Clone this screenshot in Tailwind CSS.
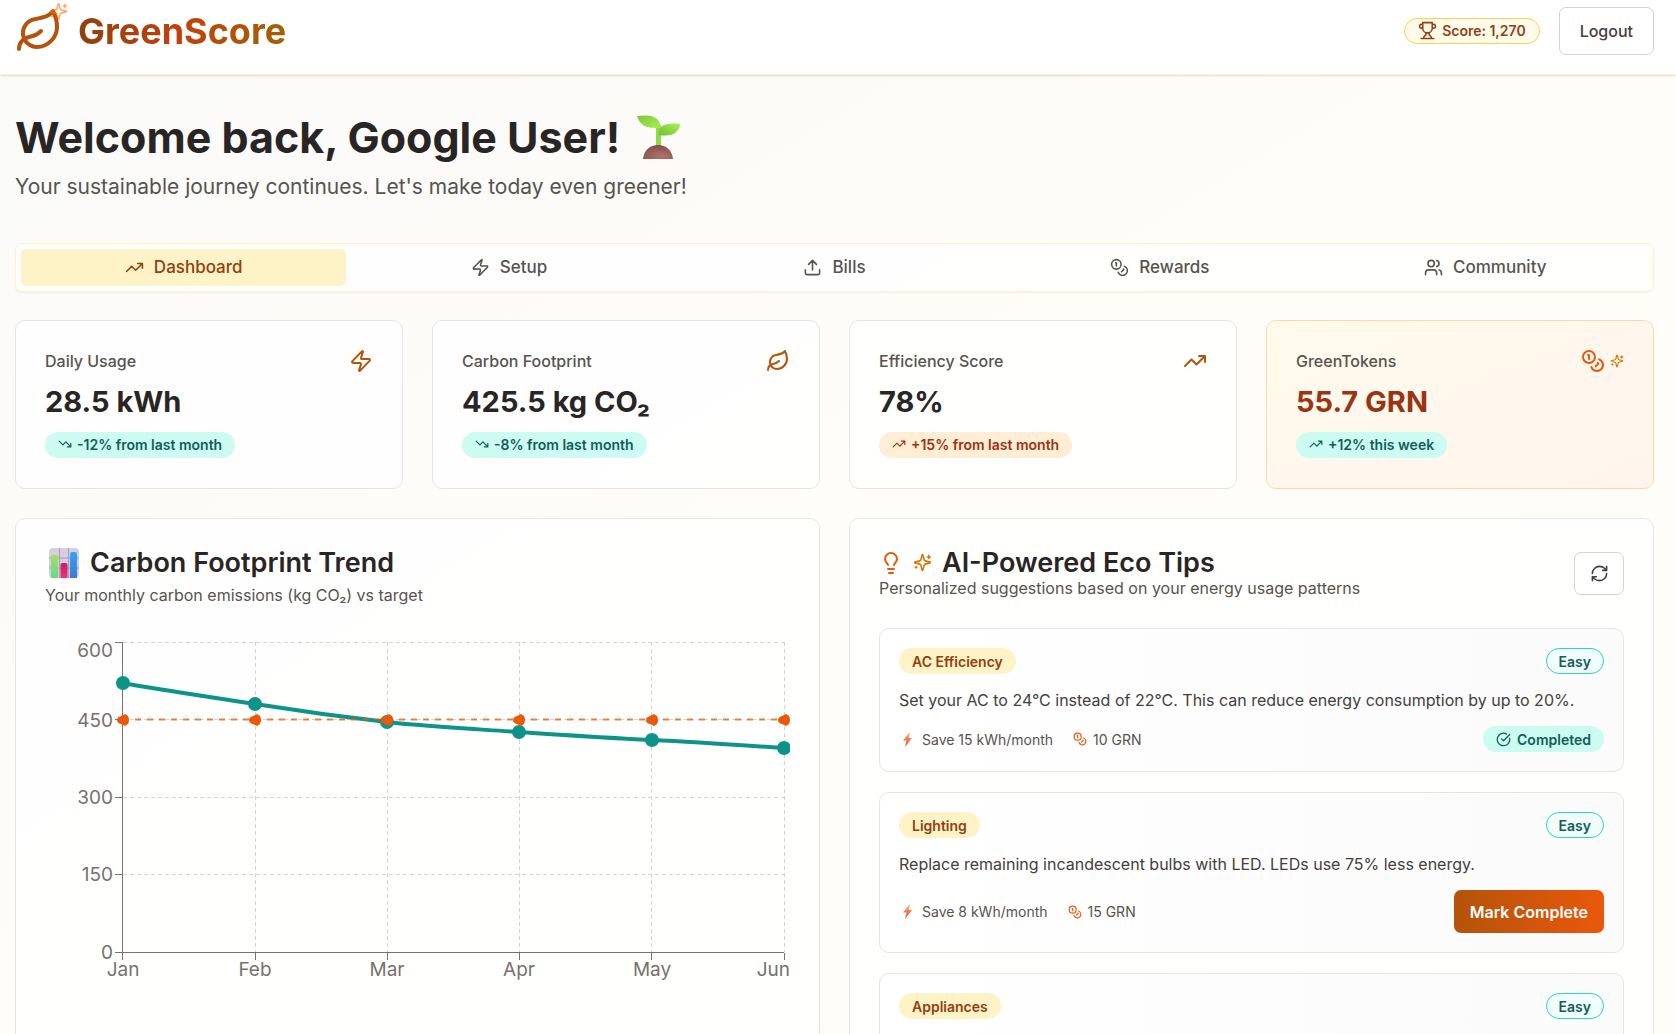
<!DOCTYPE html>
<html lang="en">
<head>
<meta charset="utf-8">
<meta name="viewport" content="width=device-width, initial-scale=1">
<title>GreenScore</title>
<script src="https://cdn.jsdelivr.net/npm/@tailwindcss/browser@4"></script>
</head>
<body class="h-screen overflow-hidden bg-linear-to-br from-[#fafaf9] via-[#fffdf9] to-[#fffdf8] font-['Inter',sans-serif] text-[#292524]">

<!-- Icon sprite -->
<svg class="hidden" aria-hidden="true">
  <symbol id="leaf" viewBox="0 0 24 24"><path d="M11 20A7 7 0 0 1 9.8 6.1C15.5 5 17 4.48 19 2c1 2 2 4.18 2 8 0 5.5-4.78 10-10 10Z"/><path d="M2 21c0-3 1.85-5.36 5.08-6C9.5 14.52 12 13 13 12"/></symbol>
  <symbol id="sparkles" viewBox="0 0 24 24"><path d="M9.937 15.5A2 2 0 0 0 8.5 14.063l-6.135-1.582a.5.5 0 0 1 0-.962L8.5 9.936A2 2 0 0 0 9.937 8.5l1.582-6.135a.5.5 0 0 1 .963 0L14.063 8.5A2 2 0 0 0 15.5 9.937l6.135 1.581a.5.5 0 0 1 0 .964L15.5 14.063a2 2 0 0 0-1.437 1.437l-1.582 6.135a.5.5 0 0 1-.963 0z"/><path d="M20 3v4M22 5h-4M4 17v2M5 18H3"/></symbol>
  <symbol id="trophy" viewBox="0 0 24 24"><path d="M6 9H4.5a2.5 2.5 0 0 1 0-5H6M18 9h1.5a2.5 2.5 0 0 0 0-5H18M4 22h16M10 14.66V17c0 .55-.47.98-.97 1.21C7.85 18.75 7 20.24 7 22M14 14.66V17c0 .55.47.98.97 1.21C16.15 18.75 17 20.24 17 22M18 2H6v7a6 6 0 0 0 12 0V2Z"/></symbol>
  <symbol id="up" viewBox="0 0 24 24"><path d="M22 7 13.5 15.5 8.5 10.5 2 17M16 7h6v6"/></symbol>
  <symbol id="down" viewBox="0 0 24 24"><path d="M22 17 13.5 8.5 8.5 13.5 2 7M16 17h6v-6"/></symbol>
  <symbol id="zap" viewBox="0 0 24 24"><path d="M4 14a1 1 0 0 1-.78-1.63l9.9-10.2a.5.5 0 0 1 .86.46l-1.92 6.02A1 1 0 0 0 13 10h7a1 1 0 0 1 .78 1.63l-9.9 10.2a.5.5 0 0 1-.86-.46l1.92-6.02A1 1 0 0 0 11 14z"/></symbol>
  <symbol id="upload" viewBox="0 0 24 24"><path d="M21 15v4a2 2 0 0 1-2 2H5a2 2 0 0 1-2-2v-4M17 8l-5-5-5 5M12 3v12"/></symbol>
  <symbol id="coins" viewBox="0 0 24 24"><circle cx="8" cy="8" r="6"/><path d="M18.09 10.37A6 6 0 1 1 10.34 18M7 6h1v4M16.71 13.88l.7.71-2.82 2.82"/></symbol>
  <symbol id="users" viewBox="0 0 24 24"><path d="M16 21v-2a4 4 0 0 0-4-4H6a4 4 0 0 0-4 4v2"/><circle cx="9" cy="7" r="4"/><path d="M22 21v-2a4 4 0 0 0-3-3.87M16 3.13a4 4 0 0 1 0 7.75"/></symbol>
  <symbol id="bulb" viewBox="0 0 24 24"><path d="M15 14c.2-1 .7-1.7 1.5-2.5 1-.9 1.5-2.2 1.5-3.5A6 6 0 0 0 6 8c0 1 .2 2.2 1.5 3.5.7.7 1.3 1.5 1.5 2.5M9 18h6M10 22h4"/></symbol>
  <symbol id="refresh" viewBox="0 0 24 24"><path d="M3 12a9 9 0 0 1 9-9 9.75 9.75 0 0 1 6.74 2.74L21 8M21 3v5h-5M21 12a9 9 0 0 1-9 9 9.75 9.75 0 0 1-6.74-2.74L3 16M8 16H3v5"/></symbol>
  <symbol id="check" viewBox="0 0 24 24"><path d="M21.801 10A10 10 0 1 1 17 3.335M9 11l3 3L22 4"/></symbol>
  <symbol id="bolt" viewBox="0 0 17 17"><path d="M11 1 4 9.500h3.500L6 16l7-9H9.500z" fill="url(#boltfill)" stroke="none"/></symbol>
</svg>
<svg class="absolute size-0" aria-hidden="true">
  <defs>
    <linearGradient id="boltfill" x1="0" y1="0" x2="0" y2="1"><stop offset="0" stop-color="#fbb040"/><stop offset=".5" stop-color="#fa7a45"/><stop offset="1" stop-color="#f0395f"/></linearGradient>
    <linearGradient id="leafA" x1="0" y1="0" x2="1" y2="1"><stop offset="0" stop-color="#7fc63a"/><stop offset="1" stop-color="#a8ee50"/></linearGradient>
    <linearGradient id="leafB" x1="0" y1="1" x2="1" y2="0"><stop offset="0" stop-color="#6fbf35"/><stop offset="1" stop-color="#aaf052"/></linearGradient>
    <radialGradient id="soil" cx=".6" cy=".8" r=".8"><stop offset="0" stop-color="#b5716d"/><stop offset="1" stop-color="#7b5247"/></radialGradient>
    <linearGradient id="barG" x1="0" y1="0" x2="0" y2="1"><stop offset="0" stop-color="#a6e15c"/><stop offset="1" stop-color="#5fdc86"/></linearGradient>
    <linearGradient id="barR" x1="0" y1="0" x2="0" y2="1"><stop offset="0" stop-color="#c41a6c"/><stop offset="1" stop-color="#f0356c"/></linearGradient>
    <linearGradient id="barB" x1="0" y1="0" x2="0" y2="1"><stop offset="0" stop-color="#2fa8f6"/><stop offset="1" stop-color="#4378cf"/></linearGradient>
  </defs>
</svg>

<header class="flex h-[75px] items-start justify-between border-b border-[#fef3c7] bg-white pt-[7px] pr-[22px] pl-[15px] shadow-sm">
  <div class="flex items-center gap-[15px]">
    <span class="relative">
      <svg class="size-12 fill-none stroke-[#b45309] stroke-2 [stroke-linecap:round] [stroke-linejoin:round]"><use href="#leaf"/></svg>
      <svg class="absolute -top-[5px] -right-[5px] size-[19px] fill-none stroke-[#f97316]/60 stroke-2 [stroke-linecap:round] [stroke-linejoin:round]"><use href="#sparkles"/></svg>
    </span>
    <span class="bg-linear-to-r/srgb from-[#92400e] via-[#c2410c] to-[#a16207] bg-clip-text text-[36px] leading-[44px] font-bold text-transparent">GreenScore</span>
  </div>
  <div class="flex items-center gap-[19px]">
    <span class="flex h-[26px] items-center gap-[5px] rounded-full border border-[#fcd34d] bg-[#fffbeb] px-[13px] pb-px text-[14px] font-semibold text-[#92400e]"><svg class="size-[19px] fill-none stroke-current stroke-2 [stroke-linecap:round] [stroke-linejoin:round]"><use href="#trophy"/></svg>Score: 1,270</span>
    <button class="h-12 rounded-[7px] border border-stone-300 bg-white px-5 text-[16px] font-medium text-stone-700">Logout</button>
  </div>
</header>

<main class="pt-[38px] pr-[22px] pl-[15px]">
  <h1 class="flex items-center gap-[17px] text-[43px] leading-[48px] font-bold">Welcome back, Google User!
    <svg class="size-11" viewBox="0 0 44 44" role="img" aria-label="seedling">
      <path d="M19 10h5v22h-5z" fill="#8fdc48"/>
      <path d="M0 1c8-1 16-1 20 3 3 3 4 6 3 9-6 0-13 0-17-3C2 7 1 4 0 1z" fill="url(#leafA)"/>
      <path d="M43 9c-8-1-15 0-18 2-3 3-4 6-3 9 6 1 13 1 17-3 3-3 4-5 4-8z" fill="url(#leafB)"/>
      <path d="M6 44c1-9 7-14 15-14s14 5 15 14z" fill="url(#soil)"/>
    </svg>
  </h1>
  <p class="mt-[10px] text-[21px] leading-8 text-stone-600">Your sustainable journey continues. Let's make today even greener!</p>

  <nav class="mt-10 grid h-[49px] grid-cols-5 rounded-[7px] border border-[#fef3c7] bg-white/80 p-[5px] text-[17px] font-medium text-stone-600 shadow-xs" role="tablist">
    <button role="tab" aria-selected="true" class="flex items-center justify-center gap-[10px] rounded-[5px] bg-[#fef3c7] text-[#92400e]"><svg class="size-[19px] fill-none stroke-current stroke-2 [stroke-linecap:round] [stroke-linejoin:round]"><use href="#up"/></svg>Dashboard</button>
    <button role="tab" class="flex items-center justify-center gap-[10px]"><svg class="size-[19px] fill-none stroke-current stroke-2 [stroke-linecap:round] [stroke-linejoin:round]"><use href="#zap"/></svg>Setup</button>
    <button role="tab" class="flex items-center justify-center gap-[10px]"><svg class="size-[19px] fill-none stroke-current stroke-2 [stroke-linecap:round] [stroke-linejoin:round]"><use href="#upload"/></svg>Bills</button>
    <button role="tab" class="flex items-center justify-center gap-[10px]"><svg class="size-[19px] fill-none stroke-current stroke-2 [stroke-linecap:round] [stroke-linejoin:round]"><use href="#coins"/></svg>Rewards</button>
    <button role="tab" class="flex items-center justify-center gap-[10px]"><svg class="size-[19px] fill-none stroke-current stroke-2 [stroke-linecap:round] [stroke-linejoin:round]"><use href="#users"/></svg>Community</button>
  </nav>

  <section class="mt-7 grid grid-cols-4 gap-[29px]">
    <article class="h-[169px] rounded-[10px] border border-stone-200 bg-white/80 px-[29px] pt-7">
      <div class="flex h-6 items-center justify-between"><h2 class="text-[16px] font-medium text-stone-600">Daily Usage</h2><svg class="size-6 fill-none stroke-[#b45309] stroke-2 [stroke-linecap:round] [stroke-linejoin:round]"><use href="#zap"/></svg></div>
      <p class="mt-[11px] text-[29px] leading-9 font-bold">28.5 kWh</p>
      <span class="mt-3 inline-flex h-[26px] items-center gap-[5px] rounded-full bg-[#ccfbf1] px-[13px] pb-[2px] text-[14px] font-semibold text-[#115e59]"><svg class="size-[14px] fill-none stroke-current stroke-2 [stroke-linecap:round] [stroke-linejoin:round]"><use href="#down"/></svg>-12% from last month</span>
    </article>
    <article class="h-[169px] rounded-[10px] border border-stone-200 bg-white/80 px-[29px] pt-7">
      <div class="flex h-6 items-center justify-between"><h2 class="text-[16px] font-medium text-stone-600">Carbon Footprint</h2><svg class="size-6 fill-none stroke-[#b45309] stroke-2 [stroke-linecap:round] [stroke-linejoin:round]"><use href="#leaf"/></svg></div>
      <p class="mt-[11px] text-[29px] leading-9 font-bold">425.5 kg CO₂</p>
      <span class="mt-3 inline-flex h-[26px] items-center gap-[5px] rounded-full bg-[#ccfbf1] px-[13px] pb-[2px] text-[14px] font-semibold text-[#115e59]"><svg class="size-[14px] fill-none stroke-current stroke-2 [stroke-linecap:round] [stroke-linejoin:round]"><use href="#down"/></svg>-8% from last month</span>
    </article>
    <article class="h-[169px] rounded-[10px] border border-stone-200 bg-white/80 px-[29px] pt-7">
      <div class="flex h-6 items-center justify-between"><h2 class="text-[16px] font-medium text-stone-600">Efficiency Score</h2><svg class="size-6 fill-none stroke-[#b45309] stroke-2 [stroke-linecap:round] [stroke-linejoin:round]"><use href="#up"/></svg></div>
      <p class="mt-[11px] text-[29px] leading-9 font-bold">78%</p>
      <span class="mt-3 inline-flex h-[26px] items-center gap-[5px] rounded-full bg-[#ffedd5] px-[13px] pb-[2px] text-[14px] font-semibold text-[#9a3412]"><svg class="size-[14px] fill-none stroke-current stroke-2 [stroke-linecap:round] [stroke-linejoin:round]"><use href="#up"/></svg>+15% from last month</span>
    </article>
    <article class="h-[169px] rounded-[10px] border border-[#fed7aa] bg-linear-to-br from-[#fffbeb] via-[#fff7ed] to-[#fff5ec] px-[29px] pt-7">
      <div class="flex h-6 items-center justify-between"><h2 class="text-[16px] font-medium text-stone-600">GreenTokens</h2><span class="flex items-center gap-[5px]"><svg class="size-6 fill-none stroke-[#ea580c] stroke-2 [stroke-linecap:round] [stroke-linejoin:round]"><use href="#coins"/></svg><svg class="size-[14px] fill-none stroke-[#d97706] stroke-2 [stroke-linecap:round] [stroke-linejoin:round]"><use href="#sparkles"/></svg></span></div>
      <p class="mt-[11px] text-[29px] leading-9 font-bold text-[#9a3412]">55.7 GRN</p>
      <span class="mt-3 inline-flex h-[26px] items-center gap-[5px] rounded-full bg-[#ccfbf1] px-[13px] pb-[2px] text-[14px] font-semibold text-[#115e59]"><svg class="size-[14px] fill-none stroke-current stroke-2 [stroke-linecap:round] [stroke-linejoin:round]"><use href="#up"/></svg>+12% this week</span>
    </article>
  </section>

  <div class="mt-[29px] grid grid-cols-2 gap-[29px]">
    <section class="rounded-[10px] border border-stone-200 bg-white/80 px-[29px] pt-7">
      <h2 class="flex items-center gap-[10px] text-[27px] leading-8 font-semibold">
        <svg class="ml-[3px] size-8" viewBox="0 0 32 32" role="img" aria-label="bar chart">
          <rect x="1" y="1" width="30" height="30" rx="4" fill="#d6cfe0"/>
          <path d="M11.500 1v30M20.500 1v30M1 11h30M1 21h30" stroke="#a79db8"/>
          <path d="M3 31V10q0-2 2-2h3q2 0 2 2v21z" fill="url(#barG)"/>
          <path d="M12.500 31V18q0-2 2-2h3q2 0 2 2v13z" fill="url(#barR)"/>
          <path d="M22 31V7q0-2 2-2h3q2 0 2 2v24z" fill="url(#barB)"/>
        </svg>Carbon Footprint Trend</h2>
      <p class="mt-1 text-[16px] leading-6 text-stone-600">Your monthly carbon emissions (kg CO₂) vs target</p>
      <svg class="mt-[29px] h-auto w-full font-['Inter',sans-serif]" viewBox="0 0 745 360" role="img" aria-label="Monthly carbon emissions against the target">
        <g stroke="#d6d3d1" stroke-dasharray="4 3" fill="none">
          <path d="M78 6.500H739M78 83.500H739M78 161.500H739M78 238.500H739" />
          <path d="M210.500 6V316M342.500 6V316M474.500 6V316M606.500 6V316M739.500 6V316"/>
        </g>
        <path d="M70 6.500h8M70 83.500h8M70 161.500h8M70 238.500h8M70 316.500H739M77.500 6V324M210.500 317v7M342.500 317v7M474.500 317v7M606.500 317v7M739.500 317v7" stroke="#78716c" fill="none"/>
        <g fill="#78716c" font-size="19" text-anchor="end">
          <text x="68" y="21">600</text><text x="68" y="91">450</text><text x="68" y="168">300</text><text x="68" y="245">150</text><text x="68" y="323">0</text>
        </g>
        <g fill="#78716c" font-size="19" text-anchor="middle">
          <text x="78" y="340">Jan</text><text x="210" y="340">Feb</text><text x="342" y="340">Mar</text><text x="474" y="340">Apr</text><text x="607" y="340">May</text><text x="745" y="340" text-anchor="end">Jun</text>
        </g>
        <path d="M78 47C122 55 166 61 210 68S298 81 342 86S430 93 474 96S563 102 607 104S695 109 739 112" stroke="#0d9488" stroke-width="4" fill="none"/>
        <g fill="#0d9488"><circle cx="78" cy="47" r="7"/><circle cx="210" cy="68" r="7"/><circle cx="342" cy="86" r="7"/><circle cx="474" cy="96" r="7"/><circle cx="607" cy="104" r="7"/><circle cx="739" cy="112" r="7"/></g>
        <path d="M78 83.500H739" stroke="#ea580c" stroke-opacity=".75" stroke-width="2" stroke-dasharray="6 6"/>
        <g fill="#ea580c"><path id="dot" d="M72 84q0-3 4-4l4-2 3 2q2 4 0 8l-3 2-4-2q-4-1-4-4z"/><use href="#dot" x="132"/><use href="#dot" x="264"/><use href="#dot" x="396"/><use href="#dot" x="529"/><use href="#dot" x="661"/></g>
      </svg>
    </section>

    <section class="rounded-[10px] border border-stone-200 bg-white/80 p-[29px]">
      <div class="flex items-center justify-between">
        <div>
          <h2 class="flex items-center gap-[10px] text-[27px] leading-[29px] font-semibold"><svg class="size-6 fill-none stroke-[#ea580c] stroke-2 [stroke-linecap:round] [stroke-linejoin:round]"><use href="#bulb"/></svg><svg class="size-[19px] fill-none stroke-[#d97706] stroke-2 [stroke-linecap:round] [stroke-linejoin:round]"><use href="#sparkles"/></svg>AI-Powered Eco Tips</h2>
          <p class="text-[16px] leading-[22px] text-stone-600">Personalized suggestions based on your energy usage patterns</p>
        </div>
        <button aria-label="Refresh tips" class="flex h-[43px] w-[50px] items-center justify-center rounded-[7px] border border-stone-300 bg-white text-stone-700"><svg class="size-[19px] fill-none stroke-current stroke-2 [stroke-linecap:round] [stroke-linejoin:round]"><use href="#refresh"/></svg></button>
      </div>

      <ul class="mt-[29px] flex flex-col gap-5">
        <li class="rounded-[10px] border border-stone-200 bg-linear-to-r from-white to-[#fbfbfb] p-[19px]">
          <div class="flex justify-between text-[14px] font-semibold"><span class="flex h-[26px] items-center rounded-full bg-[#fef3c7] px-[13px] text-[#92400e]">AC Efficiency</span><span class="flex h-[26px] items-center rounded-full border border-[#2dd4bf] bg-[#f0fdfa] px-3 text-[#115e59]">Easy</span></div>
          <p class="mt-[14px] text-[16px] leading-6 text-stone-700">Set your AC to 24°C instead of 22°C. This can reduce energy consumption by up to 20%.</p>
          <div class="mt-[14px] flex items-center justify-between">
            <div class="flex gap-5 text-[14px] text-stone-600"><span class="flex items-center gap-[6px]"><svg class="size-[17px]"><use href="#bolt"/></svg>Save 15 kWh/month</span><span class="flex items-center gap-[6px]"><svg class="size-[14px] fill-none stroke-[#ea580c] stroke-2 [stroke-linecap:round] [stroke-linejoin:round]"><use href="#coins"/></svg>10 GRN</span></div>
            <span class="flex h-[26px] items-center gap-[6px] rounded-full bg-[#ccfbf1] px-[13px] text-[14px] font-semibold text-[#115e59]"><svg class="size-[15px] fill-none stroke-current stroke-2 [stroke-linecap:round] [stroke-linejoin:round]"><use href="#check"/></svg>Completed</span>
          </div>
        </li>
        <li class="rounded-[10px] border border-stone-200 bg-linear-to-r from-white to-[#fbfbfb] p-[19px]">
          <div class="flex justify-between text-[14px] font-semibold"><span class="flex h-[26px] items-center rounded-full bg-[#fef3c7] px-[13px] text-[#92400e]">Lighting</span><span class="flex h-[26px] items-center rounded-full border border-[#2dd4bf] bg-[#f0fdfa] px-3 text-[#115e59]">Easy</span></div>
          <p class="mt-[14px] text-[16px] leading-6 text-stone-700">Replace remaining incandescent bulbs with LED. LEDs use 75% less energy.</p>
          <div class="mt-[14px] flex items-center justify-between">
            <div class="flex gap-5 text-[14px] text-stone-600"><span class="flex items-center gap-[6px]"><svg class="size-[17px]"><use href="#bolt"/></svg>Save 8 kWh/month</span><span class="flex items-center gap-[6px]"><svg class="size-[14px] fill-none stroke-[#ea580c] stroke-2 [stroke-linecap:round] [stroke-linejoin:round]"><use href="#coins"/></svg>15 GRN</span></div>
            <button class="h-[43px] rounded-[7px] bg-linear-to-r/srgb from-[#b45309] to-[#ea580c] px-4 text-[16px] font-semibold text-white">Mark Complete</button>
          </div>
        </li>
        <li class="rounded-[10px] border border-stone-200 bg-linear-to-r from-white to-[#fbfbfb] p-[19px] pb-[99px]">
          <div class="flex justify-between text-[14px] font-semibold"><span class="flex h-[26px] items-center rounded-full bg-[#fef3c7] px-[13px] text-[#92400e]">Appliances</span><span class="flex h-[26px] items-center rounded-full border border-[#2dd4bf] bg-[#f0fdfa] px-3 text-[#115e59]">Easy</span></div>
        </li>
      </ul>
    </section>
  </div>
</main>
</body>
</html>
